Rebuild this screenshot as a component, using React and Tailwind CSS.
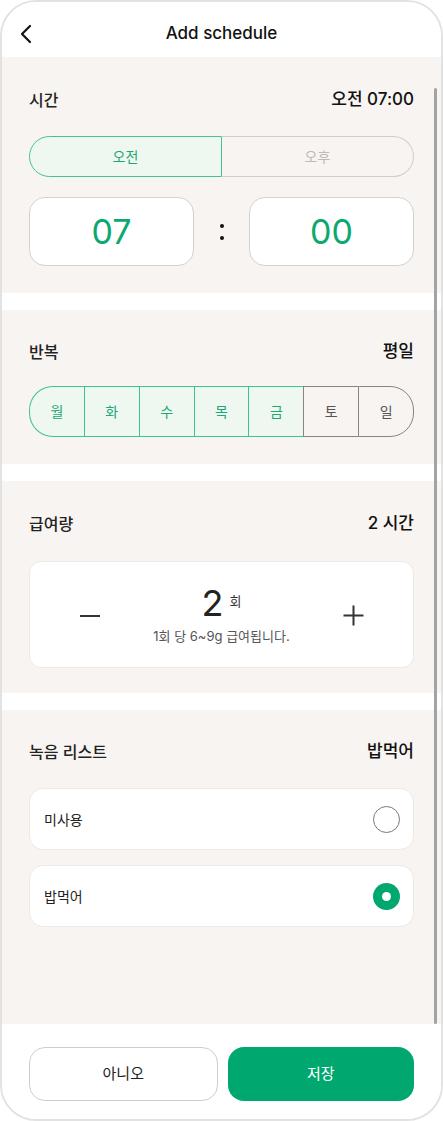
const DAYS = [
  { label: '월', on: true },
  { label: '화', on: true },
  { label: '수', on: true },
  { label: '목', on: true },
  { label: '금', on: true },
  { label: '토', on: false },
  { label: '일', on: false },
]

function SectionTitle({ left, right }) {
  return (
    <div className="flex items-center justify-between h-6">
      <span className="text-[16px] font-medium text-[#222]">{left}</span>
      <span className="text-[17px] font-medium text-[#111]">{right}</span>
    </div>
  )
}

function RadioRow({ label, checked }) {
  return (
    <div className="h-[62px] bg-white rounded-[14px] border border-[#efe9e3] flex items-center justify-between pl-[14px] pr-[13px]">
      <span className="text-[14px] text-[#222]">{label}</span>
      {checked ? (
        <span className="w-[27px] h-[27px] rounded-full bg-[#00a870] flex items-center justify-center">
          <span className="w-[9px] h-[9px] rounded-full bg-white" />
        </span>
      ) : (
        <span className="w-[27px] h-[27px] rounded-full border-[1.5px] border-[#777]" />
      )}
    </div>
  )
}

export default function App() {
  return (
    <div className="w-[443px] h-[1121px] bg-white font-[Inter,'Noto_Sans_CJK_KR',sans-serif]">
      <div className="w-full h-full rounded-[36px] border-2 border-[#e2e2e2] overflow-hidden flex flex-col">
        <header className="h-[55px] shrink-0 bg-white relative flex items-center justify-center">
          <svg className="absolute left-[17px] top-[22px]" width="14" height="20" viewBox="0 0 14 20" fill="none">
            <path d="M11 2 L3 10 L11 18" stroke="#111" strokeWidth="2.2" strokeLinecap="round" strokeLinejoin="round" />
          </svg>
          <h1 className="text-[17px] font-medium text-[#111] pt-[8px]">Add schedule</h1>
        </header>

        <main className="flex-1 relative bg-white flex flex-col gap-[17px]">
          <section className="bg-[#f7f4f1] px-[27px] pt-[31px] pb-[27px]">
            <SectionTitle left="시간" right="오전 07:00" />
            <div className="mt-[24px] h-[41px] flex">
              <div className="flex-1 rounded-l-full border-[1.5px] border-[#45c393] bg-[#eff7f1] flex items-center justify-center text-[14px] text-[#1ea874]">오전</div>
              <div className="flex-1 rounded-r-full border-[1.5px] border-l-0 border-[#d2ccc6] flex items-center justify-center text-[14px] text-[#bdbab7]">오후</div>
            </div>
            <div className="mt-[20px] flex items-center justify-between">
              <div className="w-[165px] h-[69px] rounded-[16px] bg-white border-[1.5px] border-[#d6d0ca] flex items-center justify-center text-[34px] text-[#0ba870]">07</div>
              <div className="flex flex-col gap-[8px]">
                <span className="w-[4px] h-[4px] rounded-full bg-[#111]" />
                <span className="w-[4px] h-[4px] rounded-full bg-[#111]" />
              </div>
              <div className="w-[165px] h-[69px] rounded-[16px] bg-white border-[1.5px] border-[#d6d0ca] flex items-center justify-center text-[34px] text-[#0ba870]">00</div>
            </div>
          </section>

          <section className="bg-[#f7f4f1] px-[27px] pt-[30px] pb-[27px]">
            <SectionTitle left="반복" right="평일" />
            <div className="mt-[22px] h-[51px] flex">
              {DAYS.map((d, i) => (
                <div
                  key={d.label}
                  className={`flex-1 flex items-center justify-center text-[14px] border-y-[1.5px] border-l-[1.5px]
                    ${i === 0 ? 'rounded-l-[24px]' : ''}
                    ${i === DAYS.length - 1 ? 'rounded-r-[24px] border-r-[1.5px]' : ''}
                    ${d.on ? 'border-[#3fc294] bg-[#eff7f1] text-[#1ea874]' : 'border-[#8a8480] text-[#555]'}`}
                >
                  {d.label}
                </div>
              ))}
            </div>
          </section>

          <section className="bg-[#f7f4f1] px-[27px] pt-[31px] pb-[25px]">
            <SectionTitle left="급여량" right="2 시간" />
            <div className="mt-[25px] h-[107px] bg-white rounded-[12px] border border-[#efe9e3] flex items-center justify-between pl-[50px] pr-[49px]">
              <span className="w-[20px] h-[2px] bg-[#333] mt-[2px]" />
              <div className="flex flex-col items-center">
                <div className="flex items-start">
                  <span className="text-[36px] leading-[40px] text-[#222]">2</span>
                  <span className="text-[13px] text-[#333] ml-[6px] mt-[9px]">회</span>
                </div>
                <span className="text-[13px] text-[#555] mt-[4px]">1회 당 6~9g 급여됩니다.</span>
              </div>
              <svg width="21" height="21" viewBox="0 0 21 21" className="mt-[2px]">
                <path d="M10.5 0.5 V20.5 M0.5 10.5 H20.5" stroke="#333" strokeWidth="2" />
              </svg>
            </div>
          </section>

          <section className="flex-1 bg-[#f7f4f1] px-[27px] pt-[30px]">
            <SectionTitle left="녹음 리스트" right="밥먹어" />
            <div className="mt-[24px] flex flex-col gap-[15px]">
              <RadioRow label="미사용" checked={false} />
              <RadioRow label="밥먹어" checked />
            </div>
          </section>

          <div className="absolute right-[4px] top-[31px] bottom-[0px] w-[3px] rounded-full bg-[#a3a3a3]" />
        </main>

        <footer className="h-[95px] shrink-0 bg-white px-[27px] pt-[23px] flex gap-[10px]">
          <button className="flex-1 h-[54px] rounded-[16px] border-[1.5px] border-[#d2ccc6] bg-white text-[15px] text-[#222]">아니오</button>
          <button className="flex-1 h-[54px] rounded-[16px] bg-[#00a870] text-[15px] text-white">저장</button>
        </footer>
      </div>
    </div>
  )
}
